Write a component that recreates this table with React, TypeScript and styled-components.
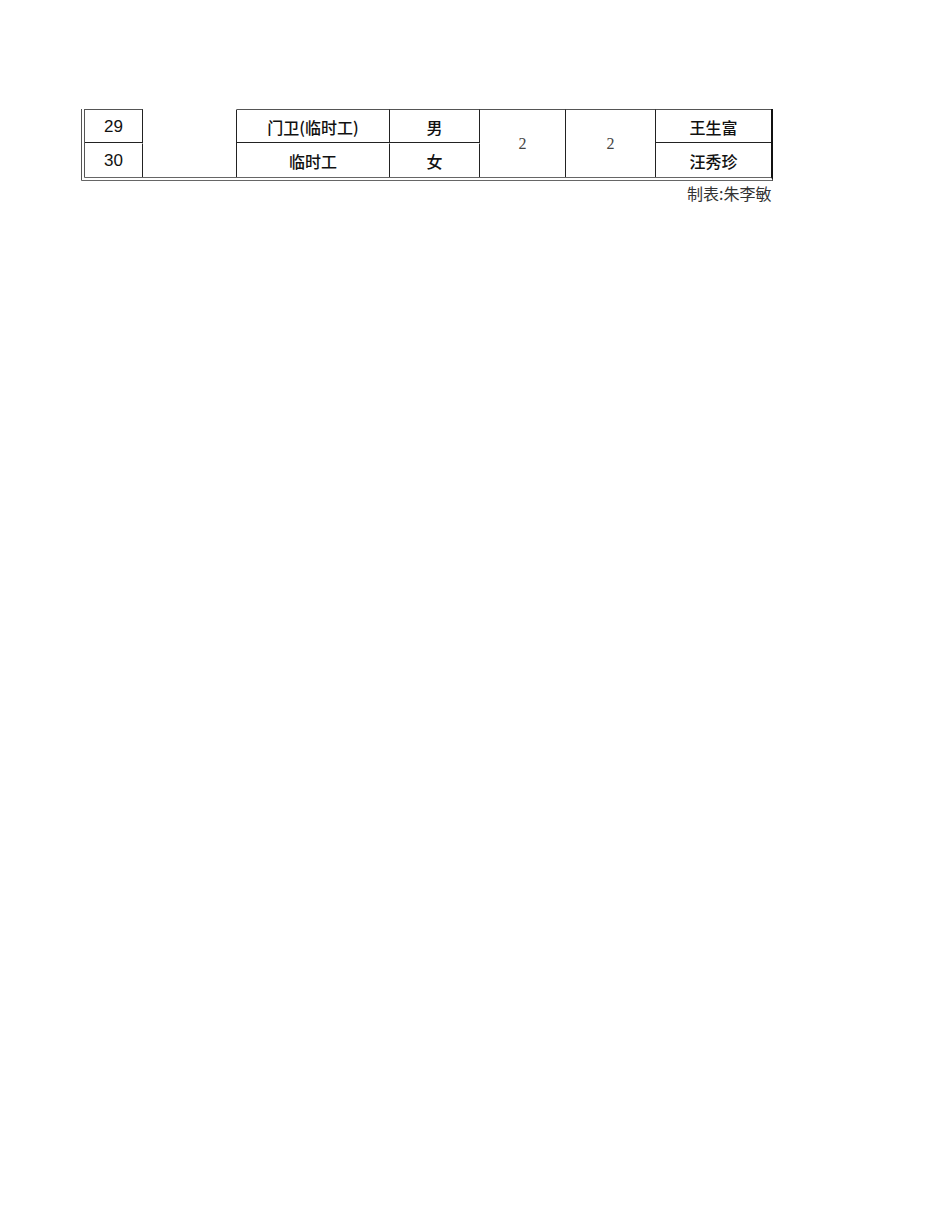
import styled, { createGlobalStyle } from 'styled-components';

const GlobalStyle = createGlobalStyle`
  body {
    margin: 0;
    background: #fff;
    font-family: "Liberation Serif", "Noto Sans CJK SC", serif;
  }
`;

// column widths inside the outer borders (left double 4px, right 2px)
const COLS = [58, 94, 153, 90, 86, 90, 115];

const Page = styled.div`
  padding: 109px 0 0 81px;
`;

const Sheet = styled.div`
  display: grid;
  grid-template-columns: ${COLS.map((c) => `${c}px`).join(' ')};
  grid-template-rows: 34px 34px;
  width: 692px;
  box-sizing: border-box;
  border-left: 4px double #555;
  border-bottom: 4px double #666;
  border-right: 2px solid #111;
`;

const Cell = styled.div<{ $top?: boolean; $mid?: boolean; $span?: boolean; $last?: boolean }>`
  display: flex;
  align-items: center;
  justify-content: center;
  box-sizing: border-box;
  border-right: ${(p) => (p.$last ? 'none' : '1px solid #222')};
  border-top: ${(p) => (p.$top ? '1px solid #555' : '1px solid transparent')};
  border-bottom: ${(p) => (p.$mid ? '1px solid #222' : 'none')};
  grid-row: ${(p) => (p.$span ? '1 / span 2' : 'auto')};
  color: #111;
  font-size: 15px;
  white-space: nowrap;
  padding-top: 1px;
`;

const Num = styled.span`
  font-family: "Liberation Sans", Arial, sans-serif;
  font-size: 17px;
  color: #111;
`;

const Han = styled.span`
  font-family: "Noto Sans CJK SC", sans-serif;
  font-size: 16px;
  font-weight: 500;
  color: #111;
`;

const Count = styled.span`
  font-family: "Liberation Serif", serif;
  font-size: 16px;
  color: #444;
`;

const Footer = styled.div`
  width: 692px;
  overflow: hidden;
  white-space: nowrap;
  padding-left: 606px;
  box-sizing: border-box;
  margin-top: 2px;
  font-family: "Noto Sans CJK SC", sans-serif;
  font-size: 16px;
  color: #333;
  line-height: 20px;
`;

export default function App() {
  return (
    <>
      <GlobalStyle />
      <Page>
        <Sheet>
          <Cell $top $mid style={{ gridColumn: 1, gridRow: 1 }}><Num>29</Num></Cell>
          <Cell $span style={{ gridColumn: 2 }} />
          <Cell $top $mid style={{ gridColumn: 3, gridRow: 1 }}><Han>门卫(临时工)</Han></Cell>
          <Cell $top $mid style={{ gridColumn: 4, gridRow: 1 }}><Han>男</Han></Cell>
          <Cell $top $span style={{ gridColumn: 5 }}><Count>2</Count></Cell>
          <Cell $top $span style={{ gridColumn: 6 }}><Count>2</Count></Cell>
          <Cell $top $mid $last style={{ gridColumn: 7, gridRow: 1 }}><Han>王生富</Han></Cell>

          <Cell style={{ gridColumn: 1, gridRow: 2 }}><Num>30</Num></Cell>
          <Cell style={{ gridColumn: 3, gridRow: 2 }}><Han>临时工</Han></Cell>
          <Cell style={{ gridColumn: 4, gridRow: 2 }}><Han>女</Han></Cell>
          <Cell $last style={{ gridColumn: 7, gridRow: 2 }}><Han>汪秀珍</Han></Cell>
        </Sheet>
        <Footer>制表:朱李敏</Footer>
      </Page>
    </>
  );
}
